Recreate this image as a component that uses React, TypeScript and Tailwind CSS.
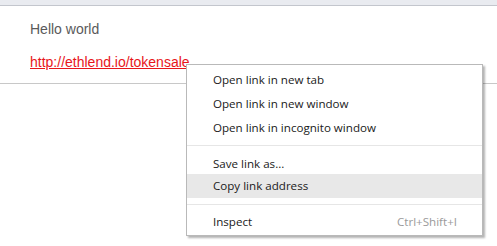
import React from "react";

const items: ({ label: string; shortcut?: string; active?: boolean } | number)[] = [
  { label: "Open link in new tab" },
  { label: "Open link in new window" },
  { label: "Open link in incognito window" },
  1,
  { label: "Save link as..." },
  { label: "Copy link address", active: true },
  2,
  { label: "Inspect", shortcut: "Ctrl+Shift+I" },
];

export default function App() {
  return (
    <div className="relative w-[497px] h-[246px] bg-white overflow-hidden">
      <div className="h-[6px] bg-[#e9ebf0] border-b border-[#c3c6cd]" />
      <div
        className="pl-[30px] pt-[15px] pb-[13px] border-b border-[#c8c8c8]"
        style={{ fontFamily: '"Liberation Sans", Arial, sans-serif' }}
      >
        <div className="text-[14px] leading-[16px] text-[#5a5a5a]">Hello world</div>
        <div className="mt-[17px] text-[14px] leading-[16px]">
          <a href="#" className="text-[#e8161b] underline">
            http://ethlend.io/tokensale
          </a>
        </div>
      </div>
      <div
        className="absolute left-[186px] top-[64px] w-[297px] bg-white border border-[#b9b9b9] pt-[3px] pb-[1px] shadow-[2px_2px_2px_rgba(0,0,0,0.3)]"
        style={{ fontFamily: '"Open Sans", "Noto Sans", sans-serif' }}
      >
        {items.map((it, i) =>
          typeof it === "number" ? (
            <div key={i} className={(it === 1 ? "h-[10px]" : "h-[12px]") + " flex items-center"}>
              <div className="w-full h-px bg-[#e6e6e6]" />
            </div>
          ) : (
            <div
              key={i}
              className={
                "h-[24px] flex items-center justify-between pl-[26px] pr-[25px] text-[11.6px] text-[#1a1a1a] " +
                (it.active ? "bg-[#e8e8e8]" : "") +
                (it.label.startsWith("Save") ? " pt-[4px]" : "")
              }
            >
              <span>{it.label}</span>
              {it.shortcut && <span className="text-[#9a9a9a]">{it.shortcut}</span>}
            </div>
          )
        )}
      </div>
    </div>
  );
}
